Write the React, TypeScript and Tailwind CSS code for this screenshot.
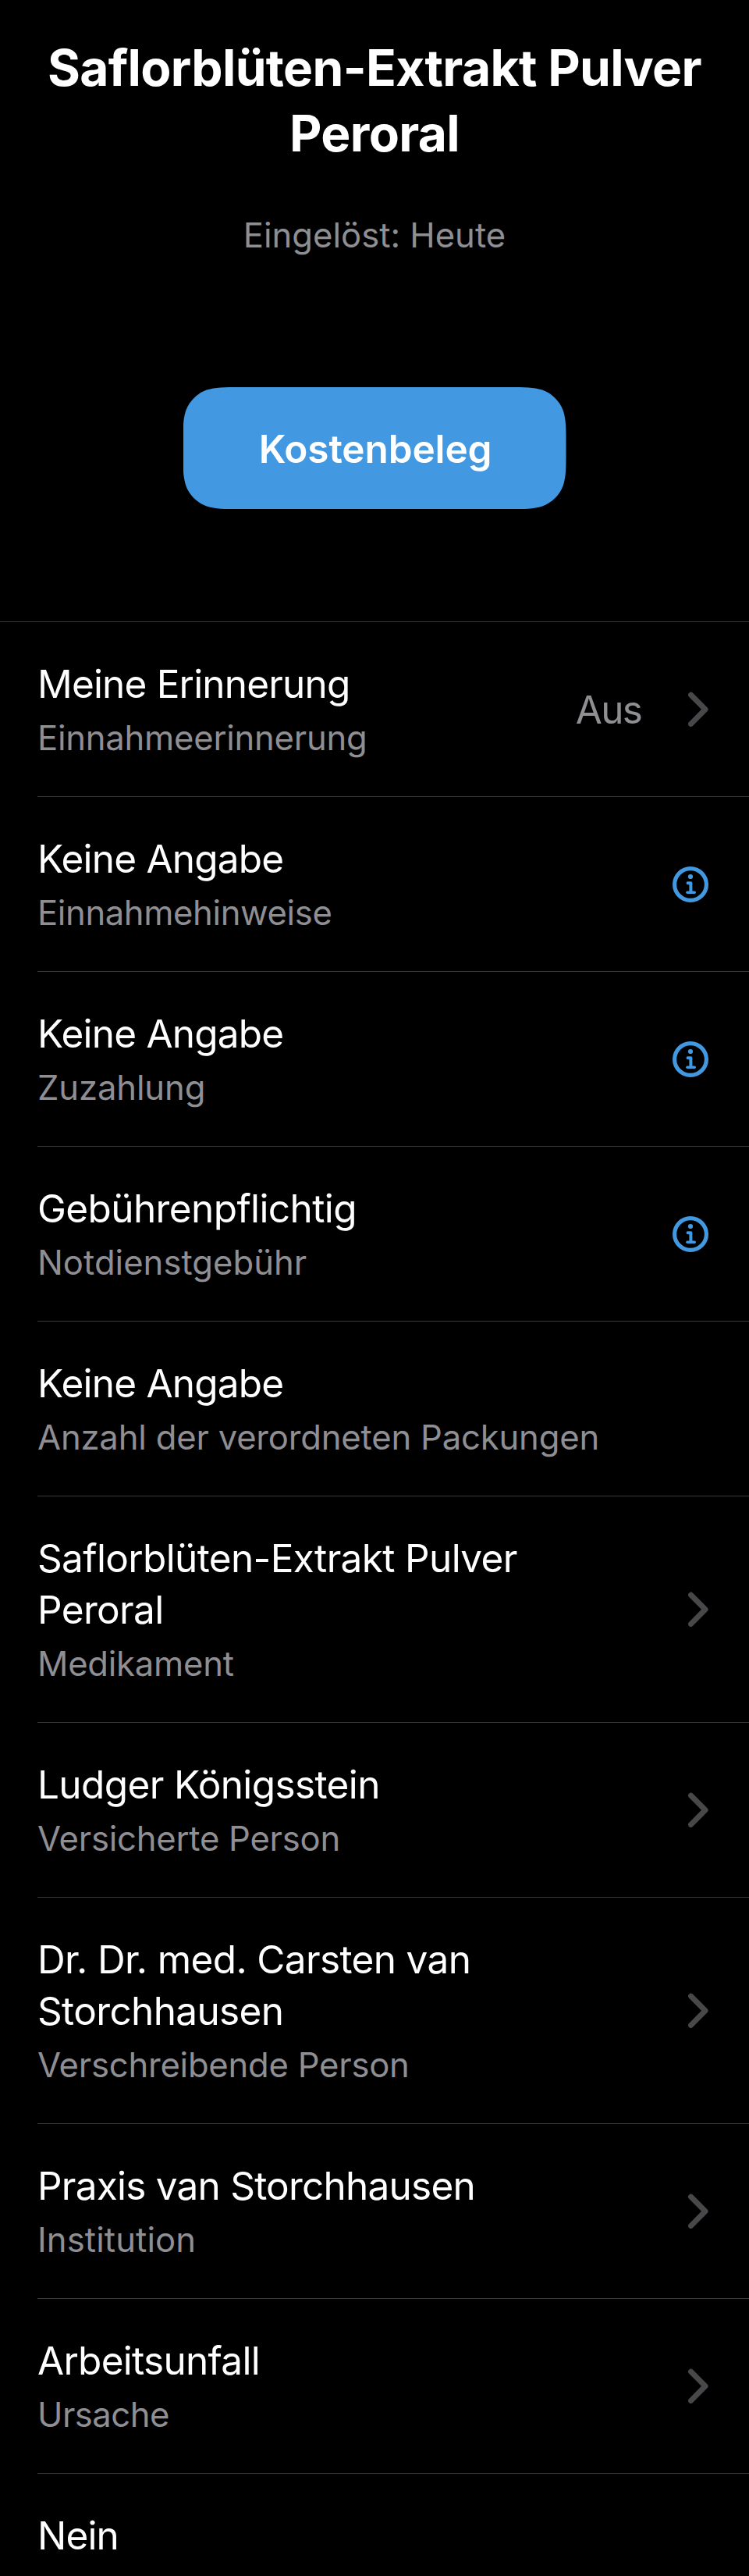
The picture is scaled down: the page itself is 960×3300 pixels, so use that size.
type Accessory = "chevron" | "info" | "none";

interface Row {
  title: string;
  titleTracking?: string;
  caption?: string;
  captionTracking?: string;
  value?: string;
  accessory: Accessory;
}

const rows: Row[] = [
  { title: "Meine Erinnerung", titleTracking: "tracking-[-0.82px]", caption: "Einnahmeerinnerung", value: "Aus", accessory: "chevron" },
  { title: "Keine Angabe", titleTracking: "tracking-[-0.79px]", caption: "Einnahmehinweise", captionTracking: "tracking-[-0.38px]", accessory: "info" },
  { title: "Keine Angabe", titleTracking: "tracking-[-0.79px]", caption: "Zuzahlung", captionTracking: "tracking-[-0.12px]", accessory: "info" },
  { title: "Gebührenpflichtig", titleTracking: "tracking-[-0.61px]", caption: "Notdienstgebühr", captionTracking: "tracking-[0.02px]", accessory: "info" },
  { title: "Keine Angabe", titleTracking: "tracking-[-0.79px]", caption: "Anzahl der verordneten Packungen", captionTracking: "tracking-[-0.19px]", accessory: "none" },
  { title: "Saflorblüten-Extrakt Pulver Peroral", caption: "Medikament", accessory: "chevron" },
  { title: "Ludger Königsstein", titleTracking: "tracking-[-0.62px]", caption: "Versicherte Person", accessory: "chevron" },
  { title: "Dr. Dr. med. Carsten van Storchhausen", titleTracking: "tracking-[-0.64px]", caption: "Verschreibende Person", captionTracking: "tracking-[-0.24px]", accessory: "chevron" },
  { title: "Praxis van Storchhausen", titleTracking: "tracking-[-0.77px]", caption: "Institution", captionTracking: "tracking-[0.1px]", accessory: "chevron" },
  { title: "Arbeitsunfall", titleTracking: "tracking-[-0.73px]", caption: "Ursache", captionTracking: "tracking-[-0.5px]", accessory: "chevron" },
  { title: "Nein", titleTracking: "tracking-[-0.85px]", accessory: "none" },
];

function Chevron() {
  return (
    <svg width="26" height="46" viewBox="0 0 26 46" fill="none" className="shrink-0">
      <path d="M3.6 4.2 22 22.8 3.6 41.4" stroke="#48484a" strokeWidth="7" strokeLinecap="round" strokeLinejoin="round" />
    </svg>
  );
}

function Info() {
  return (
    <svg width="46" height="46" viewBox="0 0 46 46" fill="none" stroke="#4299e1" className="shrink-0">
      <circle cx="23" cy="23" r="20.4" strokeWidth="5.2" />
      <circle cx="23" cy="13" r="3.1" fill="#4299e1" stroke="none" />
      <path d="M19.6 21.2H23.4V33" strokeWidth="4" strokeLinecap="round" strokeLinejoin="round" />
      <path d="M19 33.3H28.2" strokeWidth="3.6" strokeLinecap="round" />
    </svg>
  );
}

function ListRow({ row, last }: { row: Row; last: boolean }) {
  return (
    <li className={`ml-12 flex items-center pr-[52px] ${last ? "" : "border-b border-[#38383a]"}`}>
      <div className="min-w-0 flex-1 pt-[46px] pb-11">
        <p className={`max-w-[740px] text-[49.5px] leading-[66px] text-white ${row.titleTracking ?? "tracking-[-0.65px]"}`}>{row.title}</p>
        {row.caption && (
          <p className={`mt-[7px] text-[43.6px] leading-[60px] text-[#8e8e93] ${row.captionTracking ?? "tracking-[-0.24px]"}`}>{row.caption}</p>
        )}
      </div>
      {row.value && (
        <span className="mr-[60px] text-[49.5px] leading-[66px] tracking-[-1.8px] text-[#8e8e93]">{row.value}</span>
      )}
      {row.accessory === "chevron" && <Chevron />}
      {row.accessory === "info" && <Info />}
    </li>
  );
}

export default function App() {
  return (
    <main className="h-[3300px] w-[960px] overflow-hidden bg-black font-[Inter,sans-serif]">
      <header className="flex flex-col items-center pt-[45px] pb-36 text-center">
        <h1 className="w-[880px] text-[64px] leading-[84px] font-bold tracking-[-0.65px] text-white">
          Saflorblüten-Extrakt Pulver Peroral
        </h1>
        <p className="mt-[59px] text-[43.6px] leading-[60px] text-[#8e8e93]">Eingelöst: Heute</p>
        <button className="mt-[164px] h-[156px] w-[491px] bg-[#4299e1] pt-[2px] pl-[2px] text-[49.5px] leading-[66px] font-semibold tracking-[-0.12px] text-white [clip-path:path('M73.4_0H417.6C438.8_0_449.3_0_460.7_3.6C473.1_8.1_482.9_17.9_487.4_30.3C491_41.7_491_52.2_491_73.4V82.6C491_103.8_491_114.3_487.4_125.7C482.9_138.1_473.1_147.9_460.7_152.4C449.3_156_438.8_156_417.6_156H73.4C52.2_156_41.7_156_30.3_152.4C17.9_147.9_8.1_138.1_3.6_125.7C0_114.3_0_103.8_0_82.6V73.4C0_52.2_0_41.7_3.6_30.3C8.1_17.9_17.9_8.1_30.3_3.6C41.7_0_52.2_0_73.4_0Z')]">
          Kostenbeleg
        </button>
      </header>
      <ul className="border-t border-[#38383a]">
        {rows.map((row, i) => (
          <ListRow key={i} row={row} last={i === rows.length - 1} />
        ))}
      </ul>
    </main>
  );
}
